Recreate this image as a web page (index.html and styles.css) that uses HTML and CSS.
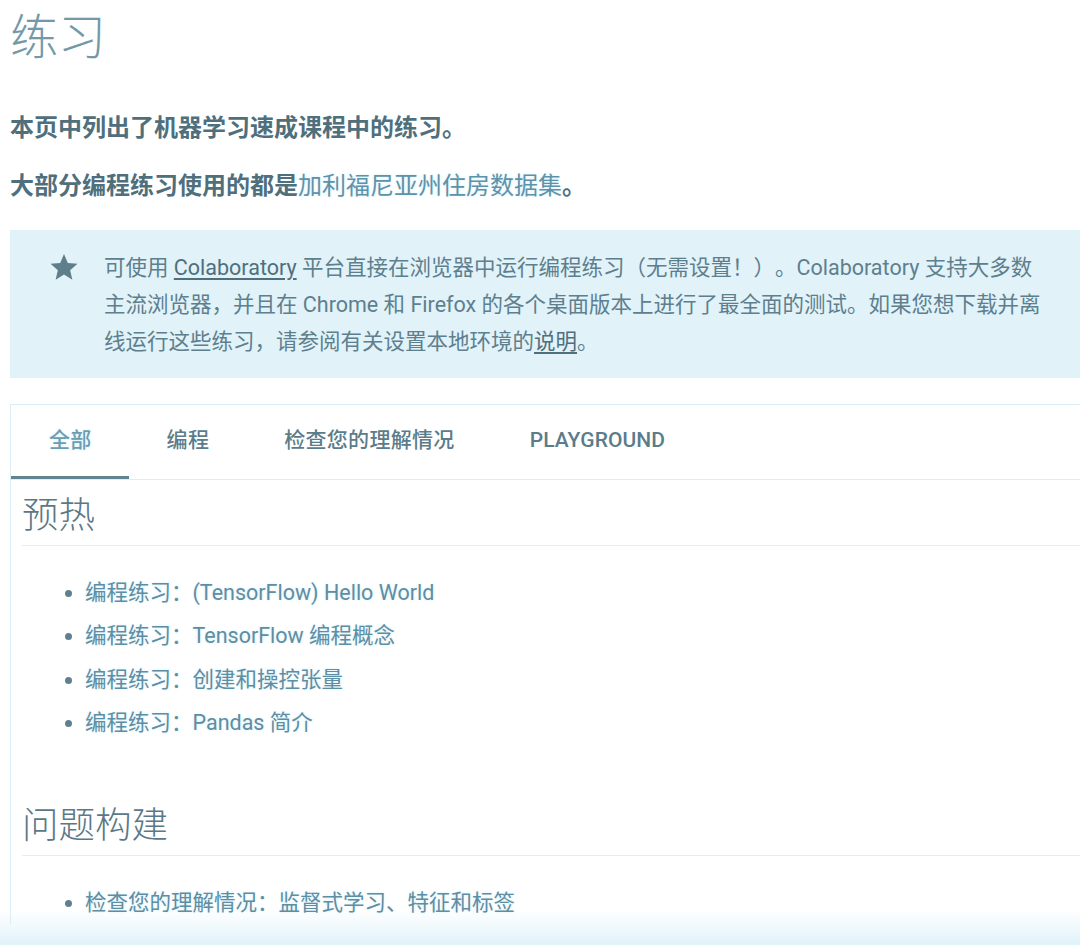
FILE: index.html
```html
<!DOCTYPE html>
<html lang="zh-CN">
<head>
<meta charset="utf-8">
<title>练习</title>
<link rel="stylesheet" href="styles.css">
</head>
<body>
<div class="page">
  <h1 class="title">练习</h1>
  <p class="lead">本页中列出了机器学习速成课程中的练习。</p>
  <p class="lead">大部分编程练习使用的都是<a class="lead-link" href="#">加利福尼亚州住房数据集</a>。</p>

  <div class="callout">
    <svg class="star" viewBox="0 0 24 24" width="30" height="30" aria-hidden="true">
      <path d="M12 1.6l3.05 7.2 7.75.62-5.88 5.08 1.78 7.6L12 18.05 5.3 22.1l1.78-7.6L1.2 9.42l7.75-.62z" fill="#5e7e8c"/>
    </svg>
    <p class="callout-text">可使用 <a href="#" class="u">Colaboratory</a> 平台直接在浏览器中运行编程练习（无需设置！）。Colaboratory 支持大多数主流浏览器，并且在 Chrome 和 Firefox 的各个桌面版本上进行了最全面的测试。如果您想下载并离线运行这些练习，请参阅有关设置本地环境的<a href="#" class="u">说明</a>。</p>
  </div>

  <div class="panel">
    <div class="tabs">
      <div class="tab active">全部</div>
      <div class="tab">编程</div>
      <div class="tab">检查您的理解情况</div>
      <div class="tab latin">PLAYGROUND</div>
    </div>
    <div class="panel-body">
      <h2 class="section">预热</h2>
      <ul class="ex-list">
        <li><a href="#">编程练习：(TensorFlow) Hello World</a></li>
        <li><a href="#">编程练习：TensorFlow 编程概念</a></li>
        <li><a href="#">编程练习：创建和操控张量</a></li>
        <li><a href="#">编程练习：Pandas 简介</a></li>
      </ul>
      <h2 class="section second">问题构建</h2>
      <ul class="ex-list">
        <li><a href="#">检查您的理解情况：监督式学习、特征和标签</a></li>
      </ul>
    </div>
  </div>
</div>
</body>
</html>
```

FILE: styles.css
```css
html, body {
  margin: 0;
  padding: 0;
}
body {
  width: 1080px;
  height: 945px;
  overflow: hidden;
  background: linear-gradient(to bottom, #ffffff 0, #ffffff 910px, #e0f2fa 945px);
  font-family: Roboto, "Noto Sans CJK SC", "Noto Sans", sans-serif;
  color: #4f6f7d;
  text-spacing-trim: space-all;
}
.page {
  width: 1130px;
  padding-left: 10px;
  box-sizing: border-box;
}
.title {
  margin: 0;
  padding-top: 6px;
  font-size: 48px;
  line-height: 64px;
  font-weight: 300;
  color: #7399a9;
}
.lead {
  margin: 0;
  font-size: 24px;
  line-height: 34px;
  font-weight: 700;
  color: #4f6f7d;
}
.title + .lead {
  margin-top: 41px;
}
.lead + .lead {
  margin-top: 24px;
}
.lead-link {
  color: #5d93aa;
  font-weight: 400;
  text-decoration: none;
  text-shadow: 0 0 3px #d6eef8;
}
.callout {
  margin-top: 27px;
  background: #e1f2f9;
  display: flex;
  align-items: flex-start;
  padding: 19px 0 18px 39px;
}
.star {
  flex: none;
  margin-top: 3px;
}
.callout-text {
  margin: 0 0 0 25px;
  width: 942px;
  font-size: 21.5px;
  line-height: 37px;
  color: #5d7f8e;
}
.u {
  color: #4f6f7d;
  text-decoration: underline;
  text-underline-offset: 3px;
}
.panel {
  margin-top: 26px;
  border: 1px solid #dcedf5;
  border-right: none;
  border-bottom: none;
}
.tabs {
  display: flex;
  border-bottom: 1px solid #dcedf5;
}
.tab {
  padding: 0 37px 0 38px;
  height: 71px;
  line-height: 71px;
  font-size: 21px;
  letter-spacing: 0.3px;
  font-weight: 500;
  color: #5b7c8a;
  border-bottom: 3px solid transparent;
}
.tab.active {
  color: #6a9db2;
  border-bottom-color: #5f8492;
  text-shadow: 0 0 3px #d6eef8;
}
.tab.latin {
  font-size: 21px;
  letter-spacing: 0.1px;
}
.panel-body {
  padding-left: 11px;
}
.section {
  margin: 12px 0 0;
  padding-bottom: 5px;
  font-size: 36.5px;
  line-height: 48px;
  font-weight: 300;
  color: #5b7886;
  border-bottom: 1px solid #e3eef3;
}
.section.second {
  margin-top: 58px;
  padding-bottom: 5px;
}
.ex-list {
  margin: 25px 0 0;
  padding-left: 63px;
  list-style: disc;
  color: #5f818f;
}
.ex-list li {
  font-size: 21.5px;
  line-height: 43.3px;
}
.ex-list a {
  color: #5d8ea3;
  text-decoration: none;
  text-shadow: 0 0 3px #d6eef8;
}
```
